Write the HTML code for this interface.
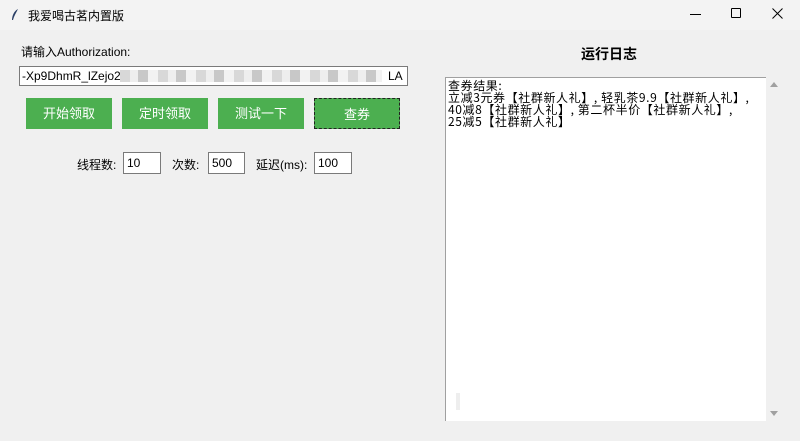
<!DOCTYPE html>
<html><head><meta charset="utf-8"><style>
*{margin:0;padding:0;box-sizing:border-box}
body{width:800px;height:441px;background:#f0f0f0;font-family:"Liberation Sans","Noto Sans CJK SC",sans-serif;position:relative;overflow:hidden;font-size:12px;color:#000}
.title{position:absolute;left:0;top:0;width:800px;height:30px;background:#f3f3f3}
.abs{position:absolute}
.btn{position:absolute;top:98px;width:86px;height:31px;background:#4caf50;color:#fff;font-size:13px;text-align:center;line-height:31px}
.inp{position:absolute;top:152px;height:22px;background:#fff;border:1px solid #7a7a7a;font-size:12px;line-height:20px;padding-left:3px}
.log{position:absolute;left:445px;top:77px;width:321px;height:344px;background:#fff;border-left:1px solid #a0a0a0;border-top:1px solid #a0a0a0;font-family:"WenQuanYi Zen Hei","Noto Sans CJK SC",monospace;font-size:12px;line-height:12px;padding:2px 0 0 2px;white-space:pre;letter-spacing:0.6px}
</style></head><body>
<div class="title">
<svg class="abs" style="left:10px;top:8px" width="10" height="14" viewBox="0 0 10 14"><path d="M8 1 C4 3 2 8 2 12 L3 12 C4 8 6 5 8 1 Z" fill="#2a3f66"/></svg>
<div class="abs" style="left:28px;top:7px;font-size:12px">我爱喝古茗内置版</div>
<div class="abs" style="left:690px;top:14px;width:11px;height:1px;background:#000"></div>
<div class="abs" style="left:731px;top:8px;width:10px;height:10px;border:1px solid #000;border-radius:1px"></div>
<svg class="abs" style="left:772px;top:8px" width="11" height="11"><path d="M0.5 0.5L10.5 10.5M10.5 0.5L0.5 10.5" stroke="#000" stroke-width="1"/></svg>
</div>
<div class="abs" style="left:21px;top:43px;font-size:12px">请输入Authorization:</div>
<div class="abs" style="left:19px;top:66px;width:389px;height:20px;background:#fff;border:1px solid #7a7a7a;font-size:12px;line-height:18px;padding-left:2px">-Xp9DhmR_lZejo2</div>
<div class="abs" style="left:120px;top:70px;width:262px;height:12px;background:repeating-linear-gradient(90deg,#d8d8d8 0 10px,#eee 10px 18px,#c8c8c8 18px 28px,#f2f2f2 28px 38px)"></div>
<div class="abs" style="left:388px;top:66px;font-size:12px;line-height:20px">LA</div>
<div class="btn" style="left:26px">开始领取</div>
<div class="btn" style="left:122px">定时领取</div>
<div class="btn" style="left:218px">测试一下</div>
<div class="btn" style="left:314px;border:1px dashed #222">查券</div>
<div class="abs" style="left:77px;top:156px">线程数:</div>
<div class="inp" style="left:123px;width:38px">10</div>
<div class="abs" style="left:172px;top:156px">次数:</div>
<div class="inp" style="left:208px;width:37px">500</div>
<div class="abs" style="left:256px;top:156px">延迟(ms):</div>
<div class="inp" style="left:314px;width:38px">100</div>
<div class="abs" style="left:581px;top:44px;font-size:14px;font-weight:bold">运行日志</div>
<div class="log">查券结果:
立减3元券【社群新人礼】, 轻乳茶9.9【社群新人礼】,
40减8【社群新人礼】, 第二杯半价【社群新人礼】,
25减5【社群新人礼】</div>
<div class="abs" style="left:456px;top:393px;width:4px;height:17px;background:#eee"></div>
<div class="abs" style="left:770px;top:82px;width:0;height:0;border-left:4px solid transparent;border-right:4px solid transparent;border-bottom:5px solid #a0a0a0"></div>
<div class="abs" style="left:770px;top:411px;width:0;height:0;border-left:4px solid transparent;border-right:4px solid transparent;border-top:5px solid #a0a0a0"></div>
</body></html>
